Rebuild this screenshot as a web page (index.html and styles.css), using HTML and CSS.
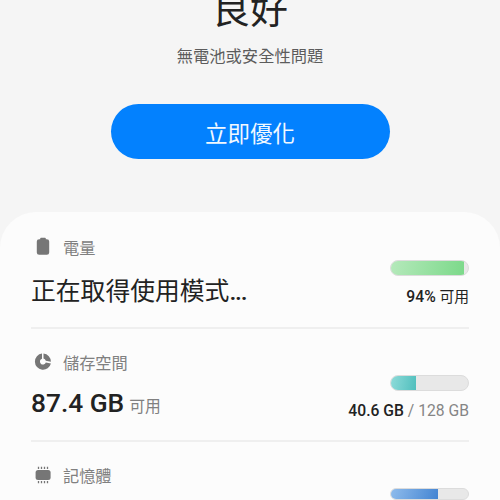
FILE: index.html
```
<!DOCTYPE html>
<html lang="zh-Hant">
<head>
<meta charset="utf-8">
<title>裝置維護</title>
<link rel="stylesheet" href="styles.css">
</head>
<body>
<header class="hero">
  <h1 class="status">良好</h1>
  <p class="detail">無電池或安全性問題</p>
  <button class="optimize">立即優化</button>
</header>
<main class="card">
  <section class="row row-battery">
    <div class="info">
      <div class="label">
        <svg class="icon" viewBox="0 0 20 20"><path d="M8 .8h4q.8 0 .8.8v.7h1q2.400 0 2.400 2.200v11q0 2.200-2.400 2.200H6.200Q3.800 17.700 3.800 15.500V4.500q0-2.200 2.400-2.200h1V1.600q0-.8.8-.8z"/></svg>
        <span>電量</span>
      </div>
      <div class="value value-text">正在取得使用模式<b class="dots">...</b></div>
    </div>
    <div class="usage">
      <div class="bar"><div class="fill green" style="width:95%"></div></div>
      <div class="amount"><b>94%</b> 可用</div>
    </div>
  </section>
  <section class="row row-storage">
    <div class="info">
      <div class="label">
        <svg class="icon" viewBox="0 0 20 20"><path d="M9 1.600A8.100 8.100 0 1 0 17.900 11.500L12.800 10.400A3 3 0 1 1 9 6.700z"/><path d="M10.500 1.600A8.100 8.100 0 0 1 17.900 9.800L12.800 8.700A3.500 3.500 0 0 0 10.500 6.500z"/></svg>
        <span>儲存空間</span>
      </div>
      <div class="value"><b>87.4 GB</b><span class="unit">可用</span></div>
    </div>
    <div class="usage">
      <div class="bar"><div class="fill teal" style="width:32%"></div></div>
      <div class="amount"><b>40.6 GB</b> <span class="total">/ 128 GB</span></div>
    </div>
  </section>
  <section class="row row-memory">
    <div class="info">
      <div class="label">
        <svg class="icon" viewBox="0 0 20 20"><rect x="2.600" y="5" width="15" height="10" rx="2.500"/><path class="pins" d="M5.500 1.700v2.200M8.500 1.700v2.200M11.500 1.700v2.200M14.500 1.700v2.200M5.500 16v2.200M8.500 16v2.200M11.500 16v2.200M14.500 16v2.200"/></svg>
        <span>記憶體</span>
      </div>
    </div>
    <div class="usage">
      <div class="bar"><div class="fill blue" style="width:61%"></div></div>
    </div>
  </section>
</main>
</body>
</html>
```
FILE: styles.css
```
* {
  box-sizing: border-box;
}

body {
  margin: 0;
  height: 500px;
  overflow: hidden;
  background: #f5f5f5;
  color: #222;
  font-family: Roboto, "Noto Sans CJK TC", sans-serif;
}

b {
  font-weight: 500;
}

.hero {
  height: 212px;
  display: flex;
  flex-direction: column;
  align-items: center;
}

.status {
  margin: -12px 0 0;
  height: 46px;
  font-size: 38px;
  font-weight: 400;
  line-height: 44px;
}

.detail {
  margin: 11px 0 0;
  font-size: 16.300px;
  line-height: 24px;
  color: #5c5c5c;
}

.optimize {
  width: 279px;
  height: 55px;
  margin-top: 35px;
  padding: 0;
  border: 0;
  border-radius: 28px;
  background: #0381fe;
  color: #f0f8ff;
  font: 400 22.500px Roboto, "Noto Sans CJK TC", sans-serif;
}

.card {
  height: 288px;
  overflow: hidden;
  padding: 0 31px;
  border-radius: 36px 36px 0 0;
  background: #fcfcfc;
}

.row {
  display: flex;
  justify-content: space-between;
  border-bottom: 2px solid #efefef;
}

.row-battery {
  height: 117px;
  padding-top: 23px;
}

.row-storage {
  height: 113px;
  padding-top: 21px;
}

.row-memory {
  height: 58px;
  padding-top: 21px;
  border-bottom: 0;
}

.label {
  display: flex;
  align-items: center;
  gap: 10px;
  height: 24px;
  padding-left: 2px;
  font-size: 16.200px;
  color: #808080;
}

.icon {
  width: 20px;
  height: 20px;
  fill: #767676;
}

.pins {
  fill: none;
  stroke: #767676;
  stroke-width: 1.300;
}

.value {
  display: flex;
  align-items: baseline;
  height: 36px;
  font-size: 26.300px;
  line-height: 36px;
}

.value-text {
  margin-top: 15px;
  font-size: 24.800px;
}

.dots {
  letter-spacing: -1.200px;
}

.row-storage .value {
  margin-top: 11px;
}

.unit {
  margin-left: 5px;
  font-size: 15.800px;
  color: #808080;
}

.usage {
  display: flex;
  flex-direction: column;
  align-items: flex-end;
  padding-top: 25px;
}

.bar {
  width: 79px;
  height: 16px;
  border: 1px solid #dcdcdc;
  border-radius: 8px;
  overflow: hidden;
  background: #e8e8e8;
}

.fill {
  height: 100%;
}

.green {
  background: linear-gradient(100deg, #b5e9bb, #7cd98a);
}

.teal {
  background: linear-gradient(100deg, #8edbd9, #50bfbd);
}

.blue {
  background: linear-gradient(110deg, #8fbcec, #4384d2);
}

.amount {
  margin-top: 9px;
  font-size: 15.700px;
  line-height: 22px;
}

.row-battery .amount {
  margin-top: 10px;
  font-size: 14.800px;
}

.row-battery .amount b {
  font-size: 15.700px;
}

.total {
  color: #858585;
}
```
